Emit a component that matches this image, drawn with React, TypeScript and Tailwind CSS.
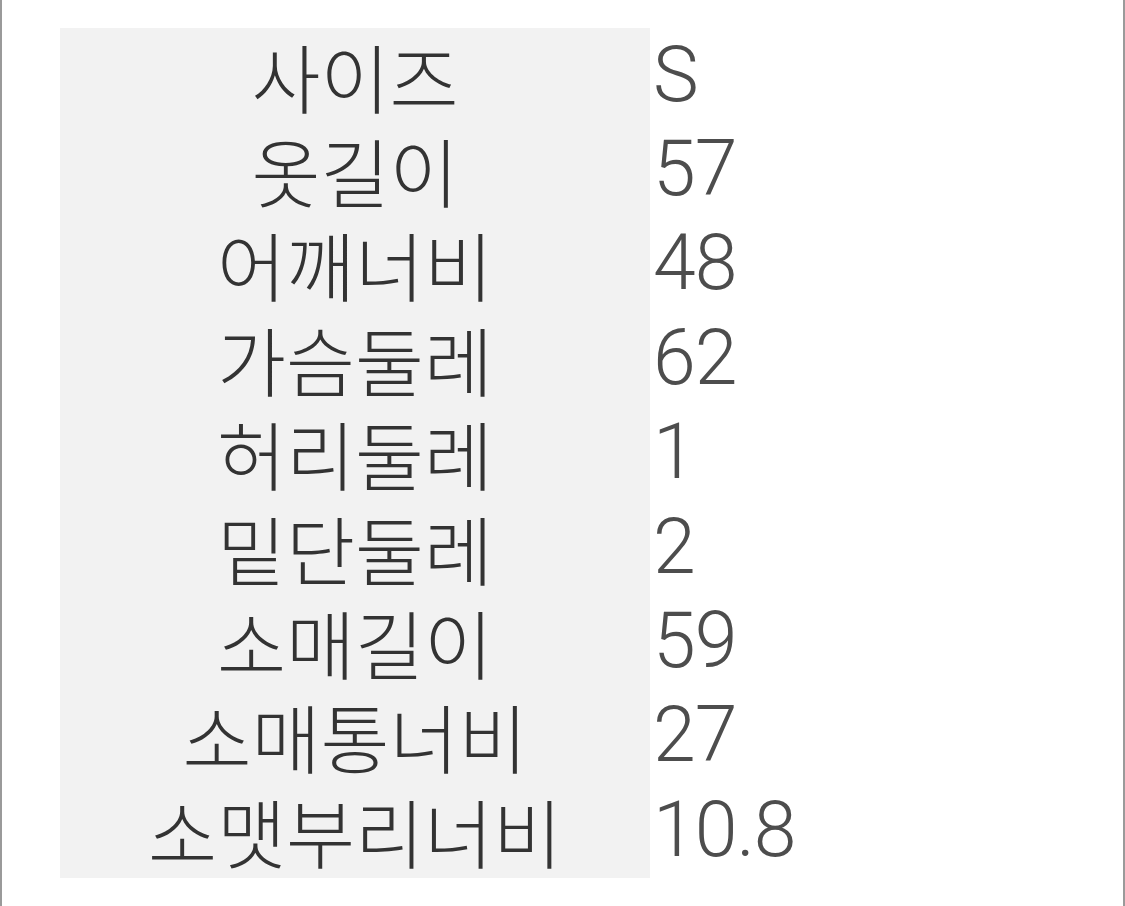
import React from 'react';

const rows: [string, string][] = [
  ['사이즈', 'S'],
  ['옷길이', '57'],
  ['어깨너비', '48'],
  ['가슴둘레', '62'],
  ['허리둘레', '1'],
  ['밑단둘레', '2'],
  ['소매길이', '59'],
  ['소매통너비', '27'],
  ['소맷부리너비', '10.8'],
];

const App: React.FC = () => {
  return (
    <div className="h-[906px] w-full border-x-2 border-[#9a9a9a] bg-white pt-[28px] pl-[58px]">
      <div className="grid w-fit grid-cols-[590px_auto]">
        {rows.map(([label, value]) => (
          <React.Fragment key={label}>
            <div
              className="flex h-[94.4px] items-center justify-center bg-[#f2f2f2] text-[75px] leading-[75px] font-light text-[#333333]"
              style={{ fontFamily: '"Noto Sans CJK KR", sans-serif' }}
            >
              {label}
            </div>
            <div
              className="flex h-[94.4px] items-center pl-[3px] text-[77px] leading-[77px] font-light tracking-[-1px] text-[#4d4d4d]"
              style={{ fontFamily: 'Roboto, "Noto Sans", sans-serif' }}
            >
              {value}
            </div>
          </React.Fragment>
        ))}
      </div>
    </div>
  );
};

export default App;
